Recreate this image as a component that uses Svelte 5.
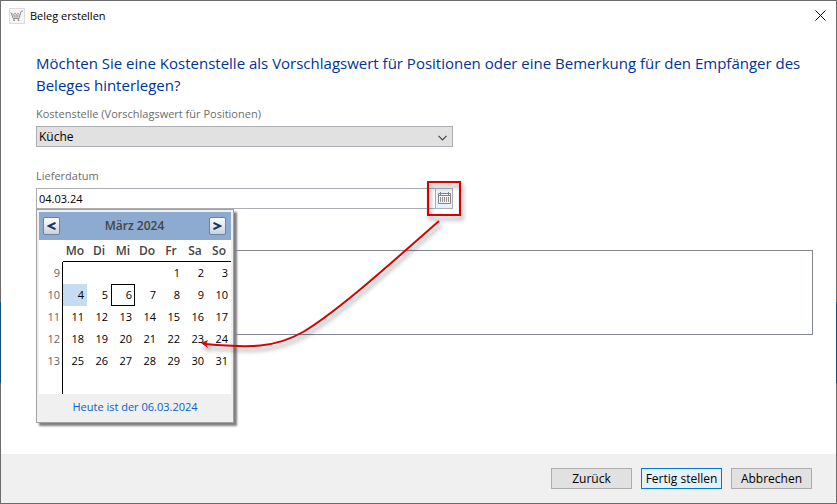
<script lang="ts">
  let kostenstelle = 'Küche';
  let lieferdatum = '04.03.24';
  let bemerkung = '';

  const kostenstellen = ['Küche'];
  const weekdays = ['Mo', 'Di', 'Mi', 'Do', 'Fr', 'Sa', 'So'];
  const selectedDay = 4;
  const today = 6;

  const weeks = [
    { number: 9, days: [null, null, null, null, 1, 2, 3] },
    { number: 10, days: [4, 5, 6, 7, 8, 9, 10] },
    { number: 11, days: [11, 12, 13, 14, 15, 16, 17] },
    { number: 12, days: [18, 19, 20, 21, 22, 23, 24] },
    { number: 13, days: [25, 26, 27, 28, 29, 30, 31] },
    { number: null, days: [null, null, null, null, null, null, null] }
  ];

  let isCalendarOpen = true;

  function toggleCalendar() {
    isCalendarOpen = !isCalendarOpen;
  }

  function selectDay(day: number) {
    lieferdatum = `${String(day).padStart(2, '0')}.03.24`;
  }
</script>

<div class="dialog">
  <header class="titlebar">
    <svg class="app-icon" width="16" height="16" viewBox="0 0 16 16" aria-hidden="true">
      <rect x="0.5" y="0.5" width="15" height="15" fill="#f5f5f5" stroke="#dcdcdc" />
      <path d="M2 4.5 L4.2 10.5 H10 L12 3.5 L14 2.8" fill="none" stroke="#8f8f8f" />
      <path d="M2.5 5 L4.5 7 L6 5 L7.5 7 L9 5 L10.5 7 M3.5 8 H10.5 M5.5 7 L6 10 M8 7 V10" fill="none" stroke="#999" stroke-width="0.9" />
      <circle cx="5" cy="12.2" r="0.9" fill="#858585" />
      <circle cx="9.5" cy="12.2" r="0.9" fill="#858585" />
    </svg>
    <span class="title">Beleg erstellen</span>
    <button class="close" aria-label="Schließen">
      <svg width="11" height="11" viewBox="0 0 11 11">
        <path d="M0.5 0.5 L10.5 10.5 M10.5 0.5 L0.5 10.5" stroke="#000" stroke-width="1" />
      </svg>
    </button>
  </header>

  <main class="content">
    <h1>
      Möchten Sie eine Kostenstelle als Vorschlagswert für Positionen oder eine Bemerkung für den Empfänger des Beleges hinterlegen?
    </h1>

    <div class="field">
      <label for="kostenstelle">Kostenstelle (Vorschlagswert für Positionen)</label>
      <div class="select-box">
        <select id="kostenstelle" bind:value={kostenstelle}>
          {#each kostenstellen as name}
            <option value={name}>{name}</option>
          {/each}
        </select>
        <svg class="chevron" width="9" height="6" viewBox="0 0 9 6" aria-hidden="true">
          <path d="M0.5 0.8 L4.5 4.8 L8.5 0.8" fill="none" stroke="#444" stroke-width="1.2" />
        </svg>
      </div>
    </div>

    <div class="field">
      <label for="lieferdatum">Lieferdatum</label>
      <div class="date-box">
        <input id="lieferdatum" type="text" bind:value={lieferdatum} />
        <button class="date-toggle" aria-label="Kalender" on:click={toggleCalendar}>
          <svg width="13" height="13" viewBox="0 0 13 13">
            <path d="M0.5 1.5 H12.5 V11.5 H0.5 Z M0.5 3.5 H12.5" fill="#f4f4f4" stroke="#858585" />
            <path d="M2.5 0 V3 M10.5 0 V3" stroke="#858585" />
            <path d="M2.5 5 V10 M4.5 5 V10 M6.5 5 V10 M8.5 5 V10 M10.5 5 V10" stroke="#8f8f8f" />
          </svg>
        </button>

        {#if isCalendarOpen}
          <div class="calendar">
            <div class="month-bar">
              <button class="month-btn" aria-label="Voriger Monat">
                <svg width="9" height="8" viewBox="0 0 9 8">
                  <path d="M8.5 0.8 L1.8 4 L8.5 7.2" fill="none" stroke="#17375e" stroke-width="2" />
                </svg>
              </button>
              <span class="month">März 2024</span>
              <button class="month-btn" aria-label="Nächster Monat">
                <svg width="9" height="8" viewBox="0 0 9 8">
                  <path d="M0.5 0.8 L7.2 4 L0.5 7.2" fill="none" stroke="#17375e" stroke-width="2" />
                </svg>
              </button>
            </div>
            <table>
              <thead>
                <tr>
                  <td class="corner"></td>
                  {#each weekdays as weekday}
                    <th scope="col">{weekday}</th>
                  {/each}
                </tr>
              </thead>
              <tbody>
                {#each weeks as week}
                  <tr>
                    <td class="week">{week.number ?? ''}</td>
                    {#each week.days as day}
                      <td class:selected={day === selectedDay} class:today={day === today}>
                        {#if day}
                          <button class="day" on:click={() => selectDay(day)}>{day}</button>
                        {/if}
                      </td>
                    {/each}
                  </tr>
                {/each}
              </tbody>
            </table>
            <button class="today-link">Heute ist der 06.03.2024</button>
          </div>
        {/if}

        <!-- hint: calendar button leads to the day in the popup -->
        <svg class="hint" width="276" height="180" viewBox="0 0 276 180" aria-hidden="true">
          <rect x="237" y="1" width="32" height="33" fill="none" stroke="#d90000" stroke-width="2" />
          <path d="M248 40 C209 74 149 129 112 151 C84 167 59 167 14 163" fill="none" stroke="#d90000" stroke-width="2" />
          <path d="M10 162 L17 159 L15 163 L17 167 Z" fill="#d90000" />
        </svg>
      </div>
    </div>

    <textarea class="remark" aria-label="Bemerkung" bind:value={bemerkung}></textarea>
  </main>

  <footer class="actions">
    <button class="btn">Zurück</button>
    <button class="btn primary">Fertig stellen</button>
    <button class="btn">Abbrechen</button>
  </footer>
</div>

<style>
  :global(body) {
    background-color: #fff;
  }

  .dialog,
  .dialog * {
    box-sizing: border-box;
  }

  .dialog {
    display: flex;
    flex-direction: column;
    min-height: 100vh;
    border: 1px solid #6b6b6b;
    border-image: linear-gradient(#6b6b6b 60%, #1b4a72 60% 76%, #6b6b6b 76%) 1;
    background-color: #fff;
    color: #000;
    font-family: 'Open Sans', 'Noto Sans', sans-serif;
    font-size: 12px;
    line-height: 16px;
  }

  button,
  input,
  select,
  textarea {
    margin: 0;
    padding: 0;
    font: inherit;
    color: inherit;
    border-radius: 0;
  }

  .titlebar {
    display: flex;
    align-items: center;
    height: 29px;
    padding: 0 8px;
    gap: 5px;
    font-size: 11px;
  }

  .title {
    flex: 1;
  }

  .close {
    display: flex;
    padding: 2px;
    border: none;
    background: none;
  }

  .content {
    flex: 1;
    padding: 22px 23px 24px 35px;
  }

  h1 {
    margin: 0 0 10px;
    color: #003399;
    font-size: 15px;
    font-weight: 400;
    line-height: 22px;
  }

  .field {
    max-width: 417px;
    margin-bottom: 21px;
  }

  .field label {
    display: block;
    margin-bottom: 4px;
    color: #6d6d6d;
    font-size: 11px;
  }

  .select-box,
  .date-box {
    position: relative;
    display: flex;
    height: 21px;
    border: 1px solid #adadb4;
  }

  select {
    flex: 1;
    padding-left: 2px;
    border: none;
    appearance: none;
    background-color: #e1e1e1;
    font-size: 12px;
  }

  .chevron {
    position: absolute;
    right: 5px;
    top: 8px;
    pointer-events: none;
  }

  .date-box input {
    flex: 1;
    min-width: 0;
    padding-left: 2px;
    border: none;
    outline: none;
    font-size: 11px;
  }

  .date-toggle {
    display: flex;
    align-items: center;
    justify-content: center;
    width: 17px;
    border: none;
    border-left: 1px solid #adadb4;
    background-color: #e5f1fb;
  }

  .calendar {
    position: absolute;
    left: -1px;
    top: 20px;
    z-index: 1;
    width: 198px;
    padding: 2px;
    border: 1px solid #a0a0a0;
    background-color: #f0f0f0;
    box-shadow: 3px 3px 2px #808080;
  }

  .month-bar {
    display: flex;
    align-items: center;
    justify-content: space-between;
    height: 28px;
    padding: 0 5px 0 4px;
    background-color: #8dabd0;
  }

  .month {
    color: #444;
    font-weight: 600;
  }

  .month-btn {
    display: flex;
    align-items: center;
    justify-content: center;
    width: 17px;
    height: 18px;
    border: 1px solid #6b83a0;
    border-radius: 2px;
    background: linear-gradient(#fff, #c8d2dc);
  }

  table {
    width: 100%;
    table-layout: fixed;
    border-collapse: separate;
    border-spacing: 0;
    background-color: #fff;
  }

  tr {
    height: 22px;
  }

  th,
  td {
    padding: 0;
    line-height: 20px;
  }

  th {
    padding-top: 1px;
    border-bottom: 1px solid #000;
    color: #444;
    font-weight: 600;
    text-align: center;
  }

  td {
    text-align: right;
  }

  td.week {
    padding-right: 2px;
    border-right: 1px solid #000;
    color: #666;
    font-size: 11px;
  }

  .day {
    display: block;
    width: 100%;
    padding-right: 3px;
    border: none;
    background: none;
    font-size: 11px;
    text-align: right;
  }

  .selected {
    background-color: #c5dcf2;
  }

  .today {
    outline: 1px solid #000;
    outline-offset: -1px;
  }

  .today-link {
    display: block;
    width: 100%;
    height: 26px;
    border: none;
    background: none;
    color: #0a60c8;
    font-size: 11px;
  }

  .hint {
    position: absolute;
    right: -15px;
    top: -8px;
    z-index: 2;
    pointer-events: none;
    filter: drop-shadow(2px 4px 2px rgba(0, 0, 0, 0.4));
  }

  .remark {
    display: block;
    width: 100%;
    height: 85px;
    margin-top: 41px;
    border: 1px solid #828790;
    resize: none;
    outline: none;
  }

  .actions {
    display: flex;
    align-items: center;
    justify-content: flex-end;
    gap: 9px;
    height: 49px;
    padding: 0 24px;
    background-color: #f0f0f0;
  }

  .btn {
    width: 81px;
    height: 21px;
    border: 1px solid #adadad;
    background-color: #e1e1e1;
    line-height: 16px;
    white-space: nowrap;
  }

  .btn.primary {
    border-color: #0078d7;
    background-color: #e5f1fb;
  }
</style>
